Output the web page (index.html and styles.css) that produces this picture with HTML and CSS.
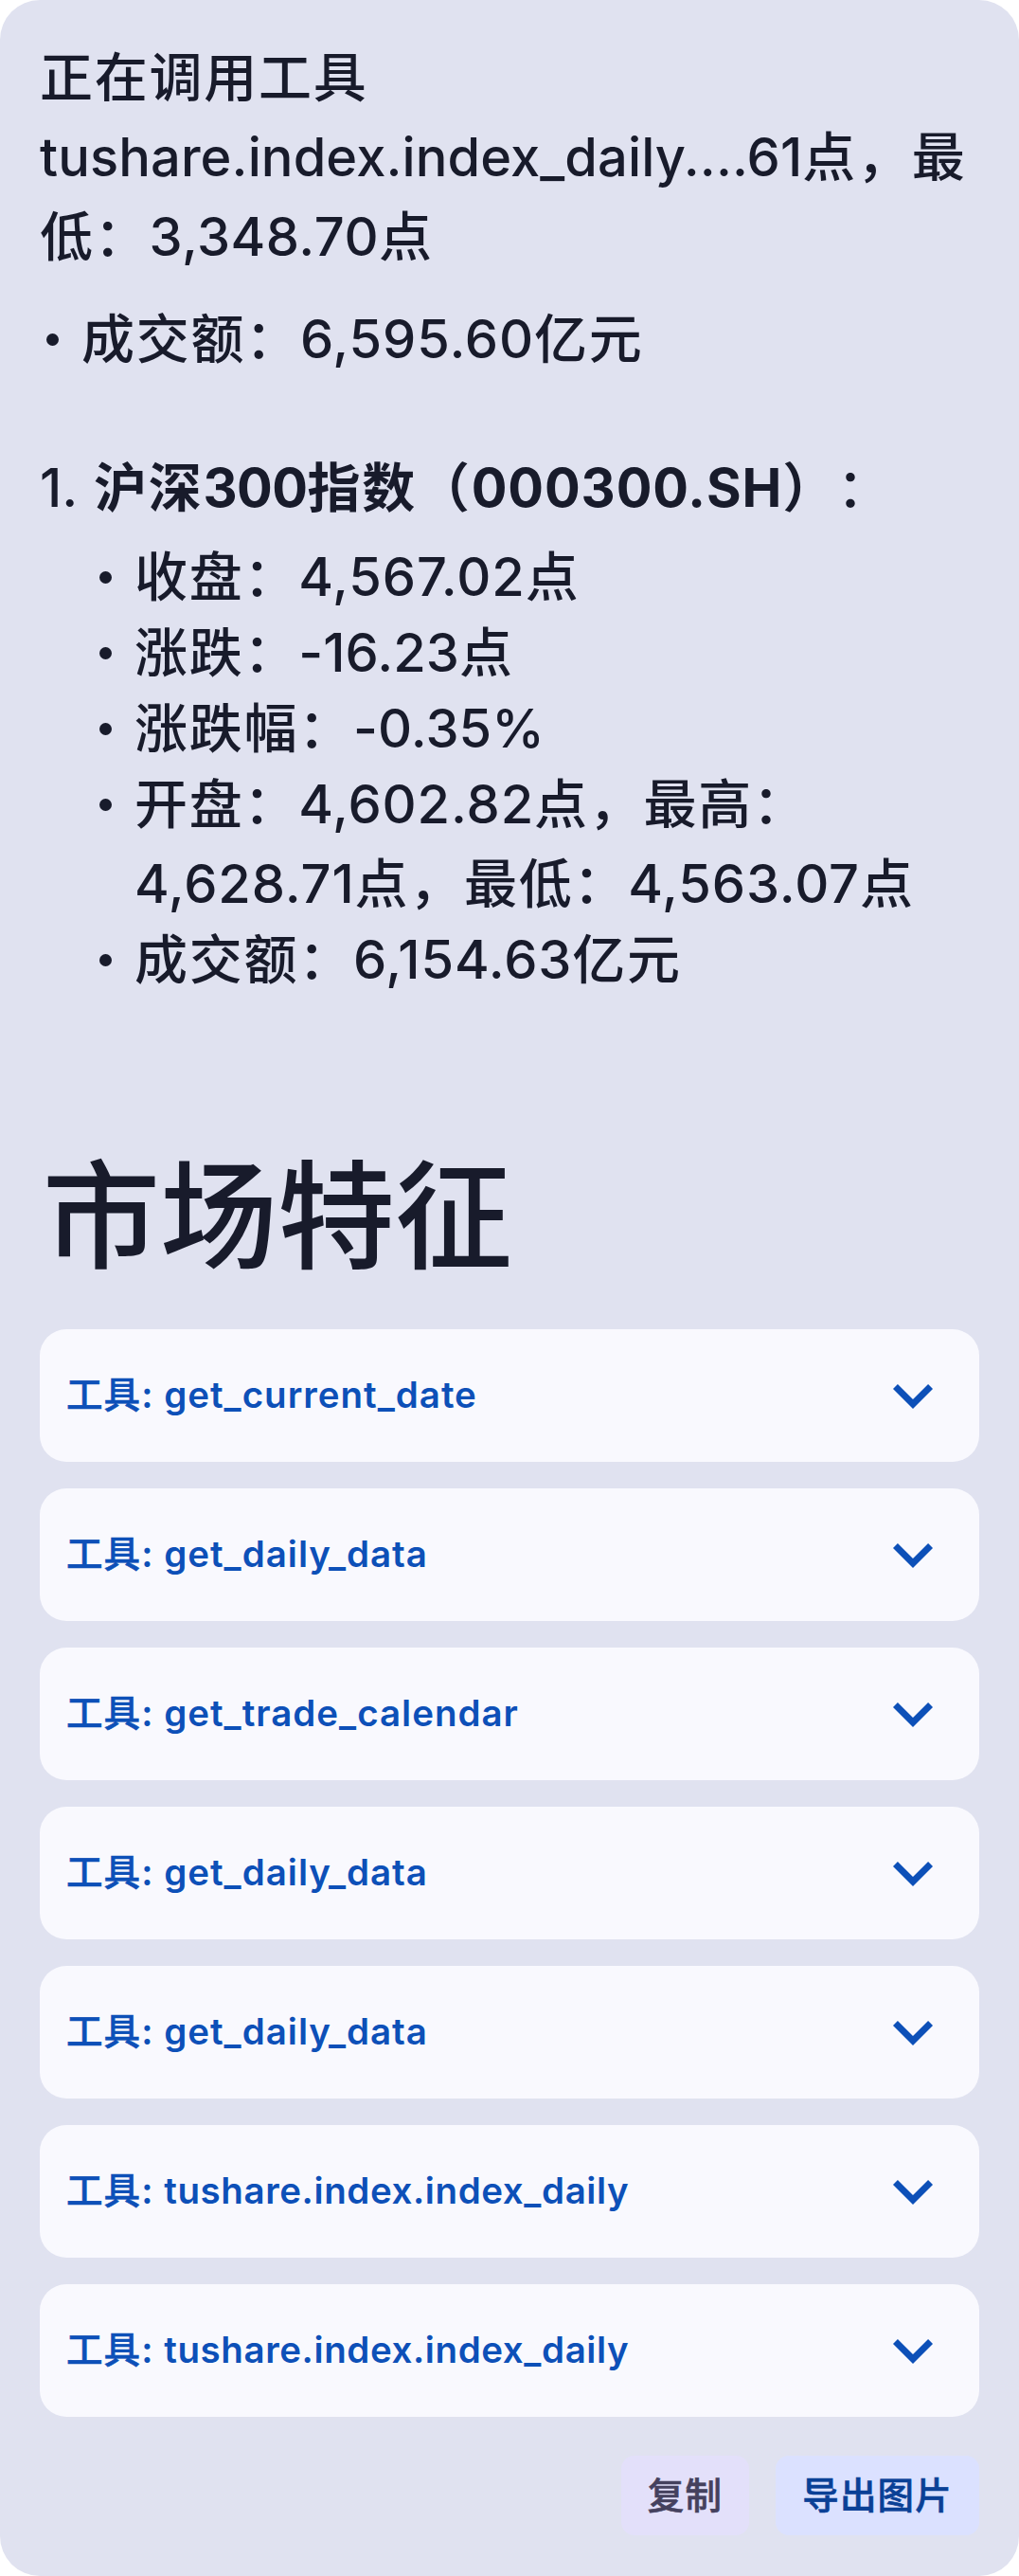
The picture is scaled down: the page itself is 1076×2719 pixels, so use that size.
FILE: index.html
```html
<!DOCTYPE html>
<html lang="zh-CN">
<head>
<meta charset="utf-8">
<title>市场特征</title>
<link rel="stylesheet" href="styles.css">
</head>
<body>
<svg width="0" height="0" class="defs"><symbol id="chevron" viewBox="0 0 24 24"><path d="M16.59 8.59 12 13.17 7.41 8.59 6 10l6 6 6-6z"/></symbol></svg>
<main class="bubble">
  <div class="text intro">
    <p>正在调用工具</p>
    <p><span class="name">tushare.index.index_daily....61</span>点，最</p>
    <p>低：<span class="num tight">3,348.70</span>点</p>
  </div>
  <ul class="list outer">
    <li>成交额：<span class="num">6,595.60</span>亿元</li>
  </ul>
  <p class="text numbered"><span class="marker">1.</span><span><strong>沪深<span class="bold-num">300</span>指数（<span class="code">000300.SH</span>）</strong>：</span></p>
  <ul class="list nested">
    <li>收盘：<span class="num">4,567.02</span>点</li>
    <li>涨跌：<span class="num short">-16.23</span>点</li>
    <li>涨跌幅：<span class="num short">-0.35%</span></li>
    <li>开盘：<span class="num">4,602.82</span>点，最高：<br><span class="num">4,628.71</span>点，最低：<span class="num">4,563.07</span>点</li>
    <li>成交额：<span class="num">6,154.63</span>亿元</li>
  </ul>
  <h1 class="title">市场特征</h1>
  <section class="tools">
    <div class="tool"><span class="label">工具<b>: get_current_date</b></span><svg class="icon"><use href="#chevron"/></svg></div>
    <div class="tool"><span class="label">工具<b>: get_daily_data</b></span><svg class="icon"><use href="#chevron"/></svg></div>
    <div class="tool"><span class="label">工具<b>: get_trade_calendar</b></span><svg class="icon"><use href="#chevron"/></svg></div>
    <div class="tool"><span class="label">工具<b>: get_daily_data</b></span><svg class="icon"><use href="#chevron"/></svg></div>
    <div class="tool"><span class="label">工具<b>: get_daily_data</b></span><svg class="icon"><use href="#chevron"/></svg></div>
    <div class="tool"><span class="label">工具<b>: <span class="path">tushare.index.index_daily</span></b></span><svg class="icon"><use href="#chevron"/></svg></div>
    <div class="tool"><span class="label">工具<b>: <span class="path">tushare.index.index_daily</span></b></span><svg class="icon"><use href="#chevron"/></svg></div>
  </section>
  <footer class="actions">
    <button class="button secondary">复制</button>
    <button class="button primary">导出图片</button>
  </footer>
</main>
</body>
</html>
```
FILE: styles.css
```css
* { box-sizing: border-box; margin: 0; padding: 0; }
body {
  background: #fff;
  font-family: Inter, "Noto Sans CJK SC", sans-serif;
  font-weight: 500;
  text-spacing-trim: space-all;
}
.defs { display: block; }
.bubble {
  display: flex;
  flex-direction: column;
  height: 2719px;
  padding: 40px 42px;
  border-radius: 42px;
  background: #e0e2f0;
  color: #181b2b;
}
.text, .list { font-size: 56px; line-height: 84px; letter-spacing: 1.75px; white-space: nowrap; }
.num { letter-spacing: 0.9px; }
.tight { letter-spacing: 0.5px; }
.short { letter-spacing: 0.1px; }
.bold-num { letter-spacing: -0.6px; }
.code { letter-spacing: 0.9px; }
.name { letter-spacing: 0.1px; }
.list { list-style: none; }
.list li { position: relative; margin-bottom: -4px; }
.list li::before {
  content: "";
  position: absolute;
  left: -37px;
  top: 36px;
  width: 13px;
  height: 13px;
  border-radius: 50%;
  background: currentColor;
}
.outer { margin-top: 24px; padding-left: 44px; }
.numbered { display: flex; margin-top: 77px; }
.marker { width: 57px; letter-spacing: 0; }
.nested { margin-top: 10px; padding-left: 100px; }
.title { margin-top: 153px; padding-left: 3px; font-size: 124px; font-weight: 500; line-height: 160px; }
.tools { display: flex; flex-direction: column; gap: 28px; margin-top: 39px; }
.tool {
  display: flex;
  align-items: center;
  justify-content: space-between;
  height: 140px;
  padding: 28px;
  border-radius: 28px;
  background: #f9f9fe;
  color: #0d50b8;
  font-size: 38.5px;
  letter-spacing: 1.1px;
}
.label { padding-bottom: 8px; -webkit-text-stroke: 0.6px currentColor; }
.label b { font-weight: 600; letter-spacing: 1px; -webkit-text-stroke: 0; }
.label .path { letter-spacing: 0.6px; }
.icon { width: 84px; height: 84px; fill: currentColor; }
.actions { display: flex; justify-content: flex-end; gap: 28px; margin-top: 41px; }
.button {
  height: 84px;
  padding: 0 28px;
  border: 0;
  border-radius: 14px;
  font: 500 38.5px/84px Inter, "Noto Sans CJK SC", sans-serif;
  letter-spacing: 1.2px;
  -webkit-text-stroke: 0.6px currentColor;
}
.secondary { background: #e3e0fa; color: #45415e; }
.primary { background: #dbe1ff; color: #0a4096; }
```
